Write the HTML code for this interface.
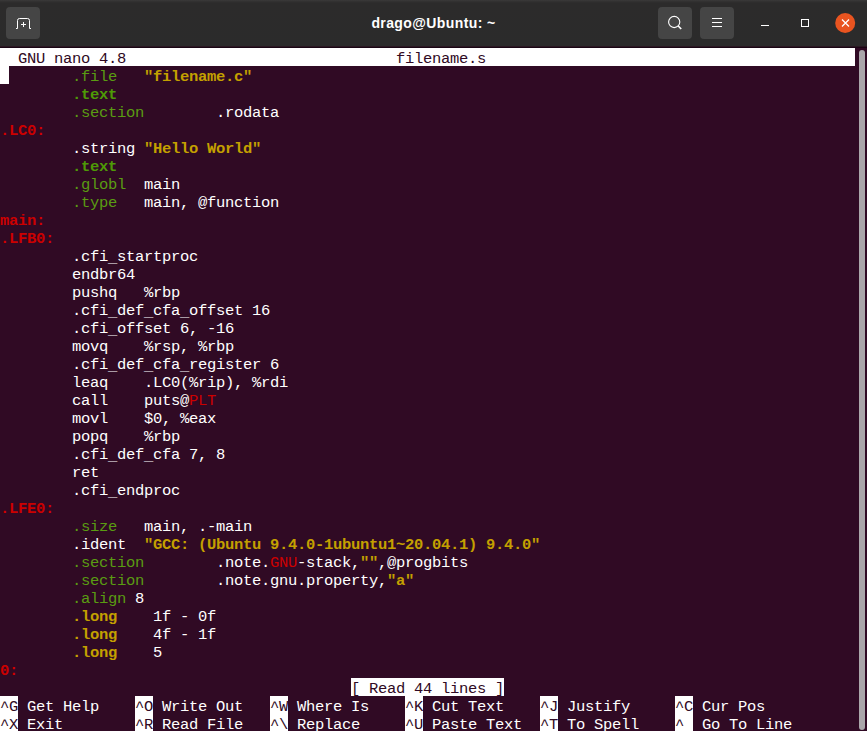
<!DOCTYPE html>
<html><head><meta charset="utf-8"><title>drago@Ubuntu: ~</title>
<style>
html,body{margin:0;padding:0;background:#300a24;}
body{width:867px;height:731px;overflow:hidden;position:relative;font-family:"Liberation Mono","DejaVu Sans Mono",monospace;}
#hb{position:absolute;left:0;top:0;width:867px;height:46px;background:linear-gradient(#3a3939 0,#323131 1.5px,#2c2b2b 3px,#2b2b2b 100%);}
#hbline{position:absolute;left:0;top:46px;width:867px;height:2px;background:linear-gradient(#2a1822 0,#2a1822 50%,#1a0614 50%,#1a0614 100%);}
.btn{position:absolute;top:7px;height:32px;width:34px;background:#454545;border-radius:4px;}
#title{position:absolute;left:0;width:867px;top:0;height:47px;line-height:46px;text-align:center;color:#fff;font-family:"Liberation Sans",sans-serif;font-weight:bold;font-size:14px;letter-spacing:0.4px;}
.t{position:absolute;white-space:pre;font-size:15.5px;letter-spacing:-0.3015px;line-height:18px;height:18px;margin-top:2px;}
.inv{position:absolute;background:#fff;}
.k{color:#300a24}
.w{color:#fff}
.g{color:#5a9c12}
.gb{color:#4e9a06;font-weight:bold}
.yb{color:#c4a000;font-weight:bold}
.rb{color:#cc0000;font-weight:bold}
.r{color:#cc0000}
.u{position:relative;top:1px}
#sb{position:absolute;left:859px;top:50px;width:6px;height:680px;border-radius:3px;background:#aaa6aa;}
svg{position:absolute;overflow:visible}
</style></head><body>
<div id="hb"></div><div id="hbline"></div>
<div class="btn" style="left:6px"></div>
<div class="btn" style="left:658px"></div>
<div class="btn" style="left:700px"></div>
<div id="title">drago@Ubuntu: ~</div>
<svg width="867" height="48" viewBox="0 0 867 48" style="left:0;top:0">
<!-- new tab icon -->
<path d="M16 28.5 h1.5 v-8 a2 2 0 0 1 2 -2 h8 a2 2 0 0 1 2 2 v8 h1.5" fill="none" stroke="#fff" stroke-width="1"/>
<path d="M21 24.5 h5 M23.5 22 v5" stroke="#fff" stroke-width="1" fill="none"/>
<!-- search -->
<circle cx="674.2" cy="22" r="5.6" fill="none" stroke="#fff" stroke-width="1.1"/>
<path d="M678.2 26 l3 3" stroke="#fff" stroke-width="1.7" fill="none"/>
<!-- menu -->
<path d="M712 18.5 h10 M712 22.5 h10 M712 26.5 h10" stroke="#fff" stroke-width="1" fill="none"/>
<!-- minimize -->
<path d="M761 25.5 h8" stroke="#fff" stroke-width="1" fill="none"/>
<!-- maximize -->
<rect x="801.5" y="19.5" width="7" height="7" fill="none" stroke="#fff" stroke-width="1"/>
<!-- close -->
<circle cx="845.2" cy="23" r="10" fill="#e95420"/>
<path d="M842 19.5 l7 7 M849 19.5 l-7 7" stroke="#fff" stroke-width="1.3" fill="none"/>
</svg>
<div class="inv" style="left:0;top:48px;width:855px;height:18px"></div>
<span class="t k" style="left:18px;top:48px">GNU nano 4.8</span>
<span class="t k" style="left:396px;top:48px">filename.s</span>
<div class="inv" style="left:0;top:66px;width:9px;height:18px"></div>
<span class="t g" style="left:72px;top:66px">.file</span>
<span class="t yb" style="left:144px;top:66px">&quot;filename.c&quot;</span>
<span class="t gb" style="left:72px;top:84px">.text</span>
<span class="t g" style="left:72px;top:102px">.section</span>
<span class="t w" style="left:216px;top:102px">.rodata</span>
<span class="t rb" style="left:0px;top:120px">.LC0:</span>
<span class="t w" style="left:72px;top:138px">.string</span>
<span class="t yb" style="left:144px;top:138px">&quot;Hello World&quot;</span>
<span class="t gb" style="left:72px;top:156px">.text</span>
<span class="t g" style="left:72px;top:174px">.globl</span>
<span class="t w" style="left:144px;top:174px">main</span>
<span class="t g" style="left:72px;top:192px">.type</span>
<span class="t w" style="left:144px;top:192px">main, @function</span>
<span class="t rb" style="left:0px;top:210px">main:</span>
<span class="t rb" style="left:0px;top:228px">.LFB0:</span>
<span class="t w" style="left:72px;top:246px">.cfi<span class="u">_</span>startproc</span>
<span class="t w" style="left:72px;top:264px">endbr64</span>
<span class="t w" style="left:72px;top:282px">pushq</span>
<span class="t w" style="left:144px;top:282px">%rbp</span>
<span class="t w" style="left:72px;top:300px">.cfi<span class="u">_</span>def<span class="u">_</span>cfa<span class="u">_</span>offset 16</span>
<span class="t w" style="left:72px;top:318px">.cfi<span class="u">_</span>offset 6, -16</span>
<span class="t w" style="left:72px;top:336px">movq</span>
<span class="t w" style="left:144px;top:336px">%rsp, %rbp</span>
<span class="t w" style="left:72px;top:354px">.cfi<span class="u">_</span>def<span class="u">_</span>cfa<span class="u">_</span>register 6</span>
<span class="t w" style="left:72px;top:372px">leaq</span>
<span class="t w" style="left:144px;top:372px">.LC0(%rip), %rdi</span>
<span class="t w" style="left:72px;top:390px">call</span>
<span class="t w" style="left:144px;top:390px">puts@</span>
<span class="t r" style="left:189px;top:390px">PLT</span>
<span class="t w" style="left:72px;top:408px">movl</span>
<span class="t w" style="left:144px;top:408px">$0, %eax</span>
<span class="t w" style="left:72px;top:426px">popq</span>
<span class="t w" style="left:144px;top:426px">%rbp</span>
<span class="t w" style="left:72px;top:444px">.cfi<span class="u">_</span>def<span class="u">_</span>cfa 7, 8</span>
<span class="t w" style="left:72px;top:462px">ret</span>
<span class="t w" style="left:72px;top:480px">.cfi<span class="u">_</span>endproc</span>
<span class="t rb" style="left:0px;top:498px">.LFE0:</span>
<span class="t g" style="left:72px;top:516px">.size</span>
<span class="t w" style="left:144px;top:516px">main, .-main</span>
<span class="t w" style="left:72px;top:534px">.ident</span>
<span class="t yb" style="left:144px;top:534px">&quot;GCC: (Ubuntu 9.4.0-1ubuntu1~20.04.1) 9.4.0&quot;</span>
<span class="t g" style="left:72px;top:552px">.section</span>
<span class="t w" style="left:216px;top:552px">.note.</span>
<span class="t r" style="left:270px;top:552px">GNU</span>
<span class="t w" style="left:297px;top:552px">-stack,</span>
<span class="t yb" style="left:360px;top:552px">&quot;&quot;</span>
<span class="t w" style="left:378px;top:552px">,@progbits</span>
<span class="t g" style="left:72px;top:570px">.section</span>
<span class="t w" style="left:216px;top:570px">.note.gnu.property,</span>
<span class="t yb" style="left:387px;top:570px">&quot;a&quot;</span>
<span class="t g" style="left:72px;top:588px">.align</span>
<span class="t w" style="left:135px;top:588px">8</span>
<span class="t yb" style="left:72px;top:606px">.long</span>
<span class="t w" style="left:153px;top:606px">1f - 0f</span>
<span class="t yb" style="left:72px;top:624px">.long</span>
<span class="t w" style="left:153px;top:624px">4f - 1f</span>
<span class="t yb" style="left:72px;top:642px">.long</span>
<span class="t w" style="left:153px;top:642px">5</span>
<span class="t rb" style="left:0px;top:660px">0:</span>
<div class="inv" style="left:351px;top:678px;width:153px;height:18px"></div>
<span class="t k" style="left:351px;top:678px">[ Read 44 lines ]</span>
<div class="inv" style="left:0px;top:696px;width:18px;height:18px"></div>
<span class="t k" style="left:0px;top:696px">^G</span>
<span class="t w" style="left:27px;top:696px">Get Help</span>
<div class="inv" style="left:135px;top:696px;width:18px;height:18px"></div>
<span class="t k" style="left:135px;top:696px">^O</span>
<span class="t w" style="left:162px;top:696px">Write Out</span>
<div class="inv" style="left:270px;top:696px;width:18px;height:18px"></div>
<span class="t k" style="left:270px;top:696px">^W</span>
<span class="t w" style="left:297px;top:696px">Where Is</span>
<div class="inv" style="left:405px;top:696px;width:18px;height:18px"></div>
<span class="t k" style="left:405px;top:696px">^K</span>
<span class="t w" style="left:432px;top:696px">Cut Text</span>
<div class="inv" style="left:540px;top:696px;width:18px;height:18px"></div>
<span class="t k" style="left:540px;top:696px">^J</span>
<span class="t w" style="left:567px;top:696px">Justify</span>
<div class="inv" style="left:675px;top:696px;width:18px;height:18px"></div>
<span class="t k" style="left:675px;top:696px">^C</span>
<span class="t w" style="left:702px;top:696px">Cur Pos</span>
<div class="inv" style="left:0px;top:714px;width:18px;height:18px"></div>
<span class="t k" style="left:0px;top:714px">^X</span>
<span class="t w" style="left:27px;top:714px">Exit</span>
<div class="inv" style="left:135px;top:714px;width:18px;height:18px"></div>
<span class="t k" style="left:135px;top:714px">^R</span>
<span class="t w" style="left:162px;top:714px">Read File</span>
<div class="inv" style="left:270px;top:714px;width:18px;height:18px"></div>
<span class="t k" style="left:270px;top:714px">^\</span>
<span class="t w" style="left:297px;top:714px">Replace</span>
<div class="inv" style="left:405px;top:714px;width:18px;height:18px"></div>
<span class="t k" style="left:405px;top:714px">^U</span>
<span class="t w" style="left:432px;top:714px">Paste Text</span>
<div class="inv" style="left:540px;top:714px;width:18px;height:18px"></div>
<span class="t k" style="left:540px;top:714px">^T</span>
<span class="t w" style="left:567px;top:714px">To Spell</span>
<div class="inv" style="left:675px;top:714px;width:18px;height:18px"></div>
<span class="t k" style="left:675px;top:714px">^<span class="u">_</span></span>
<span class="t w" style="left:702px;top:714px">Go To Line</span>
<div id="sb"></div>
</body></html>
